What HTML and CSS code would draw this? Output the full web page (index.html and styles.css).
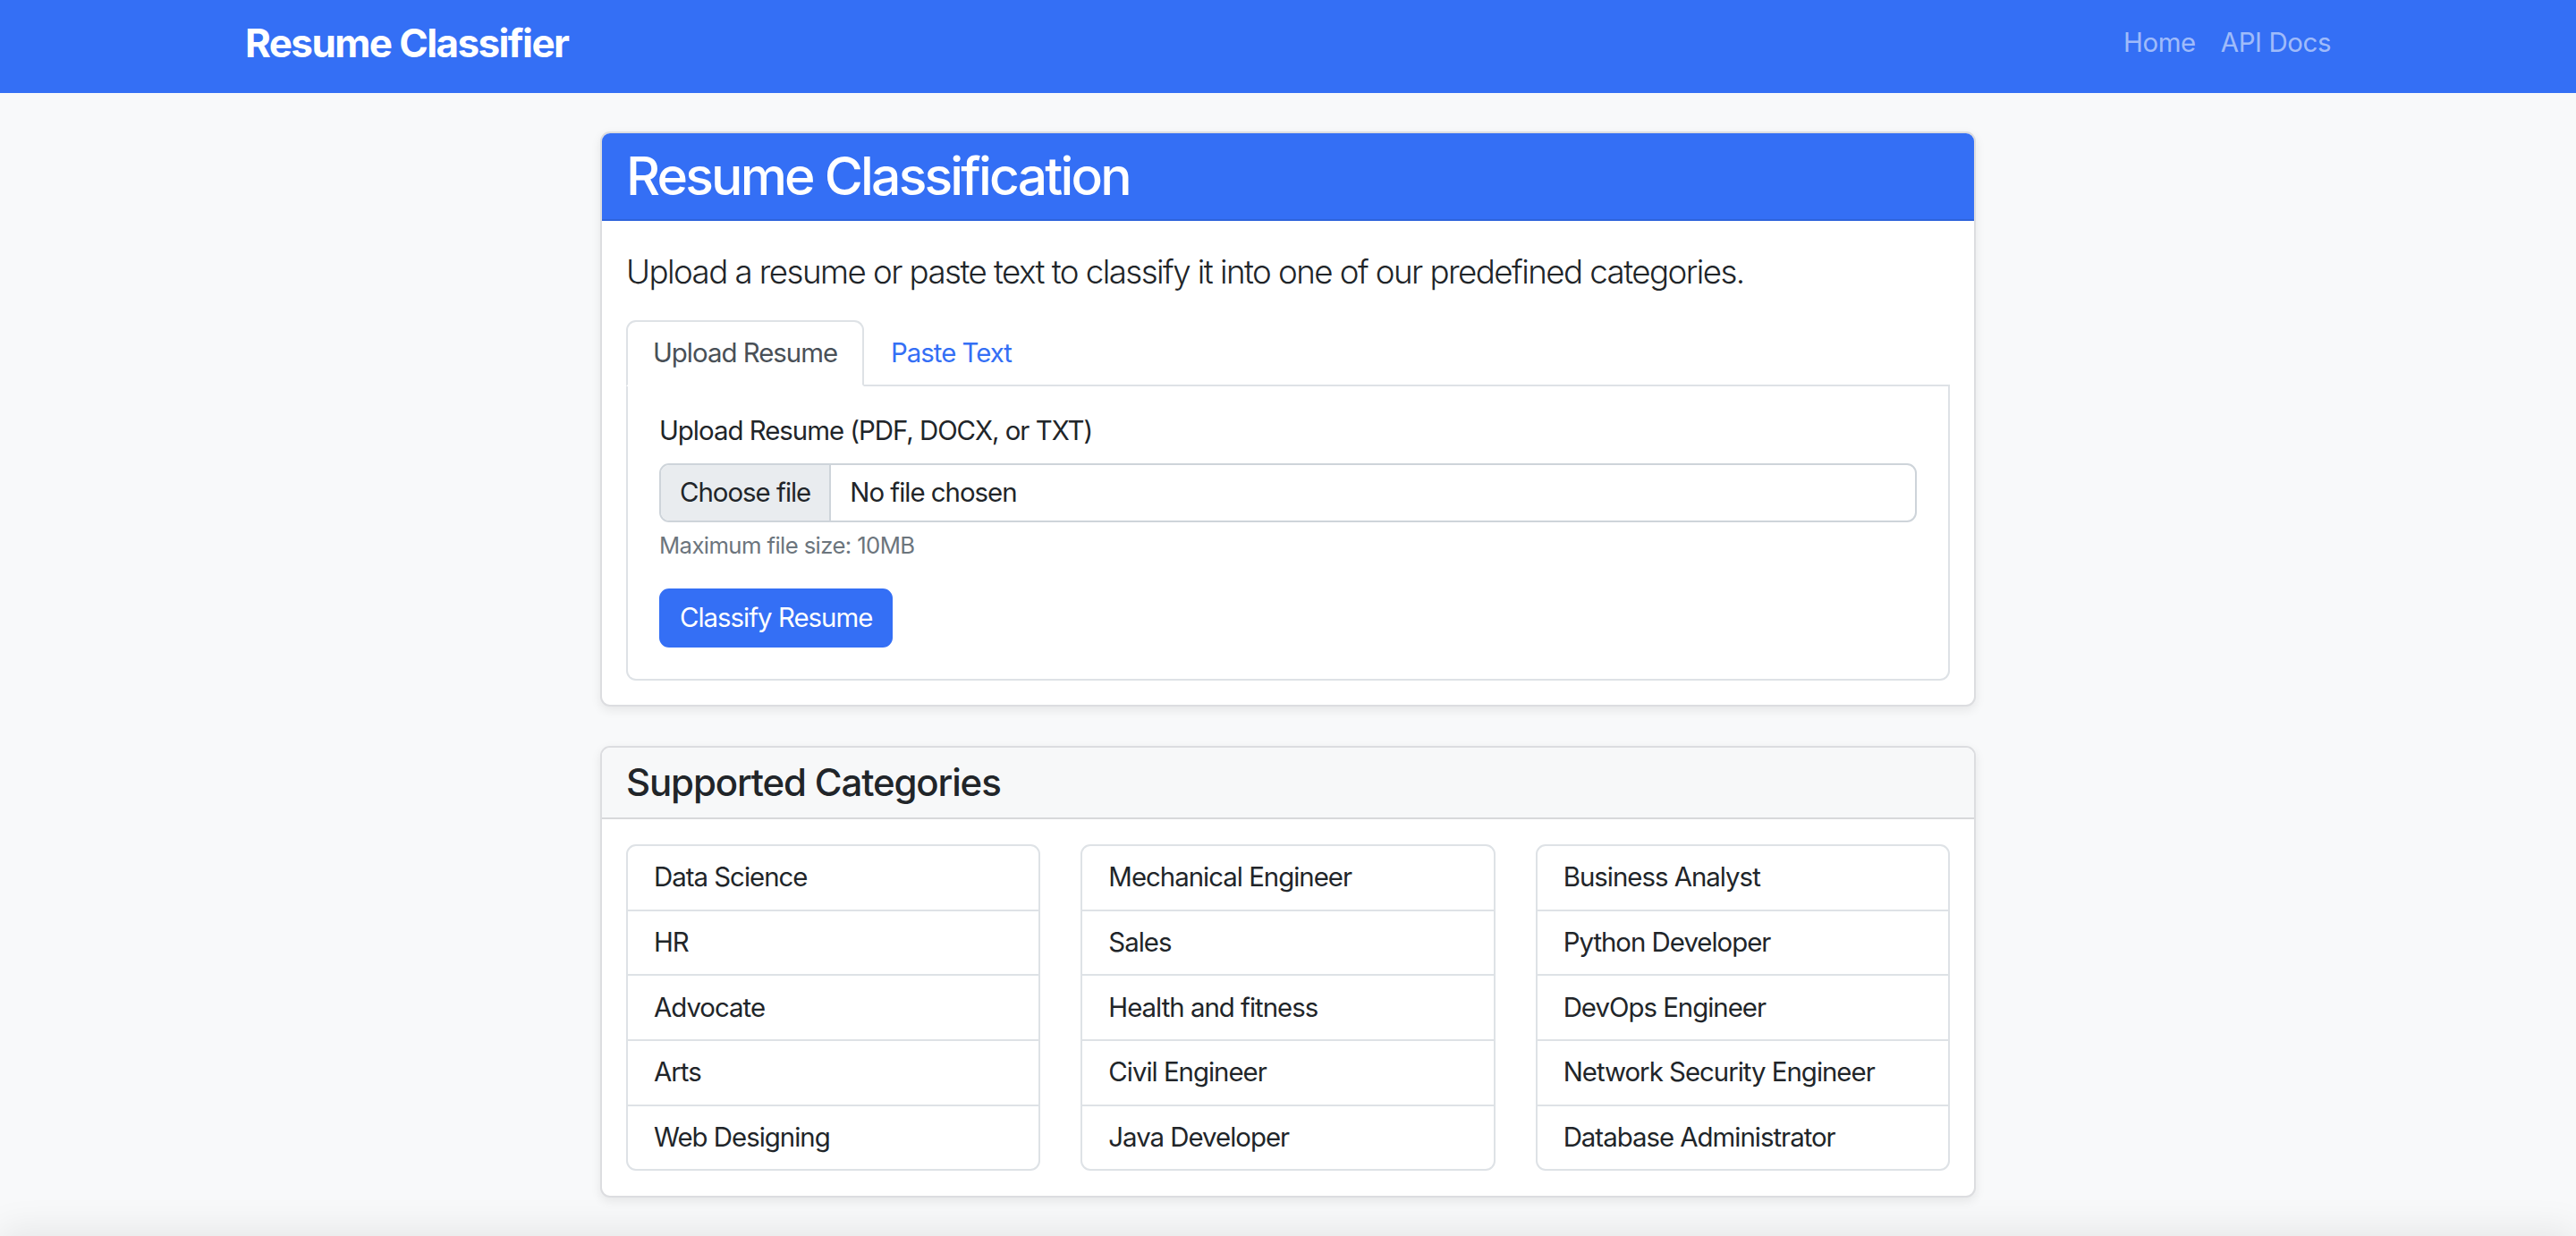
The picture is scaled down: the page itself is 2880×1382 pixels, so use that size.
FILE: index.html
```html
<!DOCTYPE html>
<html lang="en">
<head>
<meta charset="utf-8">
<title>Resume Classifier</title>
<link rel="stylesheet" href="styles.css">
</head>
<body>
<nav class="navbar">
  <div class="navbar-inner">
    <a class="brand" href="#">Resume Classifier</a>
    <ul class="nav-links">
      <li><a href="#">Home</a></li>
      <li><a href="#">API Docs</a></li>
    </ul>
  </div>
</nav>

<main class="page">
  <section class="card card-main">
    <div class="card-header header-primary">
      <h2 class="title">Resume Classification</h2>
    </div>
    <div class="card-body">
      <p class="lead">Upload a resume or paste text to classify it into one of our predefined categories.</p>
      <ul class="tabs">
        <li class="tab active">Upload Resume</li>
        <li class="tab">Paste Text</li>
      </ul>
      <div class="tab-pane">
        <label class="field-label">Upload Resume (PDF, DOCX, or TXT)</label>
        <div class="file-input">
          <span class="file-btn">Choose file</span>
          <span class="file-name">No file chosen</span>
        </div>
        <div class="form-text">Maximum file size: 10MB</div>
        <button class="btn-primary" type="button">Classify Resume</button>
      </div>
    </div>
  </section>

  <section class="card card-cats">
    <div class="card-header header-light">
      <h4 class="subtitle">Supported Categories</h4>
    </div>
    <div class="card-body cats-body">
      <ul class="list">
        <li>Data Science</li>
        <li>HR</li>
        <li>Advocate</li>
        <li>Arts</li>
        <li>Web Designing</li>
      </ul>
      <ul class="list">
        <li>Mechanical Engineer</li>
        <li>Sales</li>
        <li>Health and fitness</li>
        <li>Civil Engineer</li>
        <li>Java Developer</li>
      </ul>
      <ul class="list">
        <li>Business Analyst</li>
        <li>Python Developer</li>
        <li>DevOps Engineer</li>
        <li>Network Security Engineer</li>
        <li>Database Administrator</li>
      </ul>
    </div>
  </section>
</main>
<footer class="page-footer"></footer>
</body>
</html>
```

FILE: styles.css
```css
* { box-sizing: border-box; }

html, body {
  margin: 0;
  padding: 0;
}

body {
  background: #f8f9fa;
  color: #212529;
  font-family: Inter, "Noto Sans", "Liberation Sans", sans-serif;
  font-size: 29.4px;
  line-height: 44px;
  letter-spacing: -1px;
}

a { text-decoration: none; color: inherit; }
ul { list-style: none; margin: 0; padding: 0; }

/* Navbar */
.navbar {
  background: #346ff5;
  height: 104px;
  display: flex;
  align-items: center;
  padding-bottom: 9px;
}
.navbar-inner {
  width: 2332px;
  margin: 0 auto;
  display: flex;
  align-items: center;
  justify-content: space-between;
}
.brand {
  color: #fff;
  font-weight: 700;
  font-size: 44px;
  line-height: 54px;
  letter-spacing: -1.6px;
}
.nav-links {
  display: flex;
  gap: 28px;
}
.nav-links a {
  color: rgba(255, 255, 255, 0.55);
  font-size: 29.4px;
  letter-spacing: -0.4px;
}

/* Page */
.page {
  width: 1538px;
  margin: 43px auto 0;
  display: flex;
  flex-direction: column;
  gap: 44px;
}

.card {
  background: #fff;
  border: 2px solid #dcdde0;
  border-radius: 11px;
  box-shadow: 0 4px 12px rgba(0, 0, 0, 0.08);
  overflow: hidden;
}

.card-header {
  border-bottom: 2px solid #d8d9db;
}
.header-primary {
  background: #346ff5;
  color: #fff;
  padding: 13px 27px;
  border-bottom-color: #2e63db;
}
.header-light {
  background: #f7f8f9;
  padding: 14px 27px;
}
.title {
  margin: 0;
  font-size: 58.8px;
  line-height: 70px;
  font-weight: 500;
  letter-spacing: -2.8px;
}
.subtitle {
  margin: 0;
  font-size: 42px;
  line-height: 50.4px;
  font-weight: 500;
  letter-spacing: -1.15px;
}

.card-body {
  padding: 29px 27px 27px;
}

.lead {
  margin: 0 0 27px;
  font-size: 36.7px;
  line-height: 55px;
  font-weight: 300;
  letter-spacing: -1.55px;
}

/* Tabs */
.tabs {
  display: flex;
  border-bottom: 2px solid #dee2e6;
}
.tab {
  padding: 13px 28px;
  border: 2px solid transparent;
  border-top-left-radius: 11px;
  border-top-right-radius: 11px;
  margin-bottom: -2px;
  color: #346ff5;
}
.tab.active {
  color: #495057;
  background: #fff;
  border-color: #dee2e6 #dee2e6 #fff;
}

.tab-pane {
  border: 2px solid #dee2e6;
  border-top: 0;
  border-bottom-left-radius: 11px;
  border-bottom-right-radius: 11px;
  padding: 28px 35px 35px;
}

.field-label {
  display: block;
  margin-bottom: 14px;
}

.file-input {
  display: flex;
  height: 66px;
  border: 2px solid #ced4da;
  border-radius: 11px;
  overflow: hidden;
  align-items: stretch;
}
.file-btn {
  background: #e9ecef;
  padding: 0 21px;
  border-right: 2px solid #ced4da;
  display: flex;
  align-items: center;
}
.file-name {
  padding: 0 21px;
  display: flex;
  align-items: center;
}

.form-text {
  margin-top: 7px;
  font-size: 25.7px;
  line-height: 38.6px;
  color: #6c757d;
  letter-spacing: -0.6px;
}

.btn-primary {
  margin-top: 28px;
  height: 66px;
  padding: 0 21px;
  background: #346ff5;
  border: 2px solid #346ff5;
  border-radius: 11px;
  color: #fff;
  font: inherit;
  letter-spacing: inherit;
  display: block;
}

/* Categories */
.cats-body {
  display: grid;
  grid-template-columns: repeat(3, 1fr);
  column-gap: 45px;
  padding: 28px 27px 28px;
}
.list {
  border: 2px solid #dee2e6;
  border-radius: 11px;
  overflow: hidden;
}
.list li {
  padding: 13.35px 29px;
  border-top: 2px solid #dee2e6;
}
.list li:first-child {
  border-top: 0;
}

.page-footer {
  height: 120px;
  margin-top: 50px;
  background: #f8f9fa;
  box-shadow: 0 -14px 40px rgba(0, 0, 0, 0.08);
}
```
